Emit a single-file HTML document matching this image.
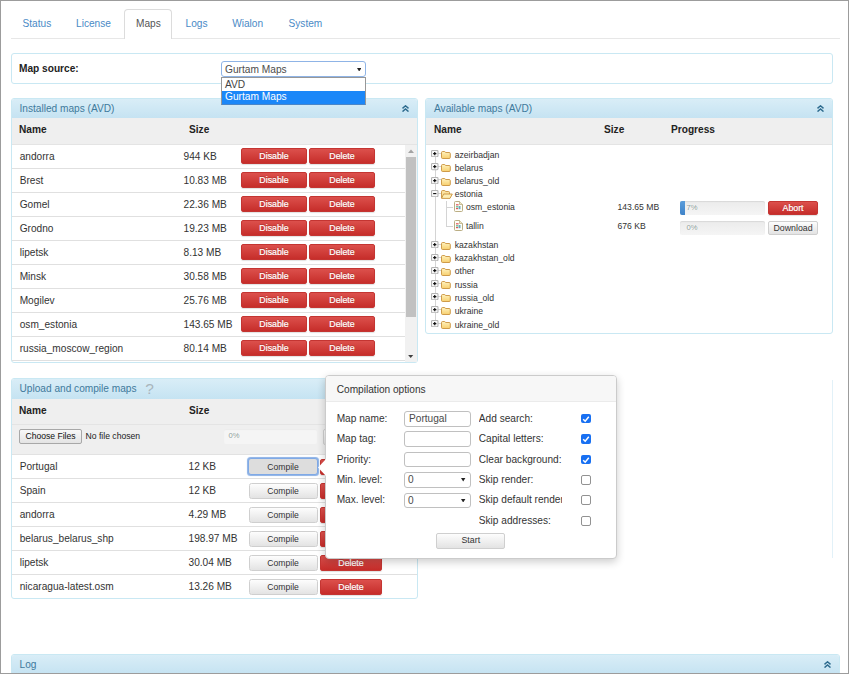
<!DOCTYPE html>
<html>
<head>
<meta charset="utf-8">
<title>Maps</title>
<style>
*{box-sizing:border-box;}
html,body{margin:0;padding:0;}
body{width:849px;height:674px;overflow:hidden;background:#fff;font-family:"Liberation Sans",Arial,sans-serif;font-size:10.15px;color:#333;position:relative;}
.frame{position:absolute;background:#9c9c9c;z-index:100;}
.abs{position:absolute;}
.t{position:absolute;white-space:nowrap;line-height:14px;height:14px;}
.tabline{position:absolute;left:11px;top:37.7px;width:829px;height:1px;background:#e7e7e7;}
.tab{position:absolute;top:16.5px;color:#4a8ac6;line-height:14px;white-space:nowrap;}
.tabact{position:absolute;left:124px;top:8.5px;width:48px;height:30.2px;border:1px solid #dcdcdc;border-bottom:none;border-radius:4px 4px 0 0;background:#fff;}
.panel{position:absolute;border:1px solid #c9e8f3;border-radius:3px;background:#fff;}
.phead{position:absolute;left:0;top:0;right:0;height:19px;background:linear-gradient(#d9edf7,#c5e3f2);border-radius:2px 2px 0 0;color:#3f7a9c;}
.colhead{position:absolute;left:0;right:0;top:19px;height:27px;background:#efefef;border-bottom:1px solid #e4e4e4;font-weight:bold;color:#222;}
.ln{position:absolute;height:1px;background:#e0e0e0;}
.btn{position:absolute;border-radius:2px;font-size:8.8px;text-align:center;white-space:nowrap;}
.red{background:linear-gradient(#dc504c,#c62d2a);color:#fff;-webkit-text-stroke:0.2px #fff;text-shadow:0 -1px 0 rgba(0,0,0,.2);border:1px solid #c43532;box-shadow:0 1px 1px rgba(0,0,0,.12);}
.gray{background:linear-gradient(#fdfdfd,#e3e3e3);color:#333;border:1px solid #cfcfcf;}
.prog{position:absolute;height:14px;border-radius:2px;background:linear-gradient(#ebebeb,#f5f5f5);box-shadow:inset 0 1px 1px rgba(0,0,0,.08);}
.ptxt{font-size:7.6px;line-height:8px;color:#8d9b98;text-shadow:0 0 1px #fff,0 0 2px #fff;white-space:nowrap;}
.inp{position:absolute;width:67.5px;height:15.6px;border:1px solid #c0c0c0;border-radius:3px;background:#fff;}
.cb{position:absolute;width:9.8px;height:9.8px;border-radius:2px;}
.cb.on{background:#1870f2;}
.cb.off{background:#fff;border:1px solid #929292;}
.tree{font-size:8.65px;color:#333;}
</style>
</head>
<body>
<div class="frame" style="left:0;top:0;width:1.2px;height:674px"></div><div class="frame" style="left:0;top:0;width:849px;height:1px"></div><div class="frame" style="left:847.9px;top:0;width:1.1px;height:674px"></div><div class="frame" style="left:0;top:672.7px;width:849px;height:1.3px"></div>
<svg width="0" height="0" style="position:absolute"><linearGradient id="fg" x1="0" y1="0" x2="0" y2="1"><stop offset="0" stop-color="#fff3bf"/><stop offset="1" stop-color="#f7cf6e"/></linearGradient></svg>
<div class="tabline"></div>
<div class="tabact"></div>
<div class="tab" style="left:22.5px">Status</div>
<div class="tab" style="left:76px">License</div>
<div class="tab" style="left:185.5px">Logs</div>
<div class="tab" style="left:232.2px">Wialon</div>
<div class="tab" style="left:288.5px">System</div>
<div class="tab" style="left:136px;color:#555">Maps</div>
<div class="panel" style="left:11px;top:53px;width:822px;height:31px;"><span class="t" style="left:7px;top:8px;font-weight:bold;color:#222;">Map source:</span></div>
<div class="panel" style="left:11px;top:98px;width:407px;height:265px;">
<div class="phead"><span class="t" style="left:7.5px;top:3px;">Installed maps (AVD)</span><svg class="abs" style="right:8px;top:6.1px" width="7" height="7" viewBox="0 0 7 7"><path d="M0.5 3.4 L3.5 0.8 L6.5 3.4 M0.5 6.6 L3.5 4 L6.5 6.6" fill="none" stroke="#2d6b8e" stroke-width="1.4"/></svg></div>
<div class="colhead"><span class="t" style="left:7px;top:4.800000000000001px;">Name</span><span class="t" style="left:177px;top:4.800000000000001px;">Size</span></div>
<span class="t" style="left:7.7px;top:50.5px;">andorra</span><span class="t" style="left:171.5px;top:50.5px;">944 KB</span>
<div class="btn red" style="left:229px;top:49px;width:66px;height:16px;line-height:14px;">Disable</div>
<div class="btn red" style="left:297px;top:49px;width:66px;height:16px;line-height:14px;">Delete</div>
<div class="ln" style="left:0;width:393px;top:69px"></div>
<span class="t" style="left:7.7px;top:74.5px;">Brest</span><span class="t" style="left:171.5px;top:74.5px;">10.83 MB</span>
<div class="btn red" style="left:229px;top:73px;width:66px;height:16px;line-height:14px;">Disable</div>
<div class="btn red" style="left:297px;top:73px;width:66px;height:16px;line-height:14px;">Delete</div>
<div class="ln" style="left:0;width:393px;top:93px"></div>
<span class="t" style="left:7.7px;top:98.5px;">Gomel</span><span class="t" style="left:171.5px;top:98.5px;">22.36 MB</span>
<div class="btn red" style="left:229px;top:97px;width:66px;height:16px;line-height:14px;">Disable</div>
<div class="btn red" style="left:297px;top:97px;width:66px;height:16px;line-height:14px;">Delete</div>
<div class="ln" style="left:0;width:393px;top:117px"></div>
<span class="t" style="left:7.7px;top:122.5px;">Grodno</span><span class="t" style="left:171.5px;top:122.5px;">19.23 MB</span>
<div class="btn red" style="left:229px;top:121px;width:66px;height:16px;line-height:14px;">Disable</div>
<div class="btn red" style="left:297px;top:121px;width:66px;height:16px;line-height:14px;">Delete</div>
<div class="ln" style="left:0;width:393px;top:141px"></div>
<span class="t" style="left:7.7px;top:146.5px;">lipetsk</span><span class="t" style="left:171.5px;top:146.5px;">8.13 MB</span>
<div class="btn red" style="left:229px;top:145px;width:66px;height:16px;line-height:14px;">Disable</div>
<div class="btn red" style="left:297px;top:145px;width:66px;height:16px;line-height:14px;">Delete</div>
<div class="ln" style="left:0;width:393px;top:165px"></div>
<span class="t" style="left:7.7px;top:170.5px;">Minsk</span><span class="t" style="left:171.5px;top:170.5px;">30.58 MB</span>
<div class="btn red" style="left:229px;top:169px;width:66px;height:16px;line-height:14px;">Disable</div>
<div class="btn red" style="left:297px;top:169px;width:66px;height:16px;line-height:14px;">Delete</div>
<div class="ln" style="left:0;width:393px;top:189px"></div>
<span class="t" style="left:7.7px;top:194.5px;">Mogilev</span><span class="t" style="left:171.5px;top:194.5px;">25.76 MB</span>
<div class="btn red" style="left:229px;top:193px;width:66px;height:16px;line-height:14px;">Disable</div>
<div class="btn red" style="left:297px;top:193px;width:66px;height:16px;line-height:14px;">Delete</div>
<div class="ln" style="left:0;width:393px;top:213px"></div>
<span class="t" style="left:7.7px;top:218.5px;">osm_estonia</span><span class="t" style="left:171.5px;top:218.5px;">143.65 MB</span>
<div class="btn red" style="left:229px;top:217px;width:66px;height:16px;line-height:14px;">Disable</div>
<div class="btn red" style="left:297px;top:217px;width:66px;height:16px;line-height:14px;">Delete</div>
<div class="ln" style="left:0;width:393px;top:237px"></div>
<span class="t" style="left:7.7px;top:242.5px;">russia_moscow_region</span><span class="t" style="left:171.5px;top:242.5px;">80.14 MB</span>
<div class="btn red" style="left:229px;top:241px;width:66px;height:16px;line-height:14px;">Disable</div>
<div class="btn red" style="left:297px;top:241px;width:66px;height:16px;line-height:14px;">Delete</div>
<div class="ln" style="left:0;width:393px;top:261px"></div>
<div class="abs" style="left:393px;top:46px;width:12px;height:217px;background:#f1f1f1;"></div>
<div class="abs" style="left:394px;top:58px;width:10px;height:160px;background:#c1c1c1;"></div>
<svg class="abs" style="left:396px;top:50px" width="6" height="4" viewBox="0 0 6 4"><path d="M0 4L3 0.5L6 4Z" fill="#a3a3a3"/></svg>
<svg class="abs" style="left:396.3px;top:255.5px" width="5.4" height="3.4" viewBox="0 0 6 4"><path d="M0 0L3 3.5L6 0Z" fill="#404040"/></svg>
</div>
<div class="panel" style="left:425px;top:98px;width:408px;height:236px;">
<div class="phead"><span class="t" style="left:8px;top:3px;">Available maps (AVD)</span><svg class="abs" style="right:8px;top:6.1px" width="7" height="7" viewBox="0 0 7 7"><path d="M0.5 3.4 L3.5 0.8 L6.5 3.4 M0.5 6.6 L3.5 4 L6.5 6.6" fill="none" stroke="#2d6b8e" stroke-width="1.4"/></svg></div>
<div class="colhead"><span class="t" style="left:8px;top:4.800000000000001px;">Name</span><span class="t" style="left:178px;top:4.800000000000001px;">Size</span><span class="t" style="left:245px;top:4.800000000000001px;">Progress</span></div>
<div class="tree">
<div class="abs" style="left:8.5px;top:51px;width:1px;height:173.5px;background:#d4d4d4"></div>
<div class="abs" style="left:12px;top:54.2px;width:5px;height:1px;background:#d4d4d4"></div>
<svg class="abs" style="left:5.1px;top:51.300000000000004px" width="7.5" height="7.2" viewBox="0 0 7 7" preserveAspectRatio="none"><rect x="0.5" y="0.5" width="6" height="6" rx="0.8" fill="#fafafa" stroke="#b4b4b4"/><path d="M2 3.5H5M3.5 2V5" stroke="#111" stroke-width="1.1" fill="none"/></svg>
<svg class="abs" style="left:15.1px;top:52.300000000000004px" width="10" height="8" viewBox="0 0 10 8"><path d="M0.5 1.6Q0.5 0.5 1.6 0.5H3.4Q4.2 0.5 4.6 1.5H8.2Q9.3 1.5 9.3 2.6V6.4Q9.3 7.5 8.2 7.5H1.6Q0.5 7.5 0.5 6.4Z" fill="url(#fg)" stroke="#c9923c" stroke-width="0.9"/></svg>
<span class="t" style="left:28.7px;top:48.7px;">azeirbadjan</span>
<div class="abs" style="left:12px;top:67.3px;width:5px;height:1px;background:#d4d4d4"></div>
<svg class="abs" style="left:5.1px;top:64.39999999999999px" width="7.5" height="7.2" viewBox="0 0 7 7" preserveAspectRatio="none"><rect x="0.5" y="0.5" width="6" height="6" rx="0.8" fill="#fafafa" stroke="#b4b4b4"/><path d="M2 3.5H5M3.5 2V5" stroke="#111" stroke-width="1.1" fill="none"/></svg>
<svg class="abs" style="left:15.1px;top:65.39999999999999px" width="10" height="8" viewBox="0 0 10 8"><path d="M0.5 1.6Q0.5 0.5 1.6 0.5H3.4Q4.2 0.5 4.6 1.5H8.2Q9.3 1.5 9.3 2.6V6.4Q9.3 7.5 8.2 7.5H1.6Q0.5 7.5 0.5 6.4Z" fill="url(#fg)" stroke="#c9923c" stroke-width="0.9"/></svg>
<span class="t" style="left:28.7px;top:61.8px;">belarus</span>
<div class="abs" style="left:12px;top:80.4px;width:5px;height:1px;background:#d4d4d4"></div>
<svg class="abs" style="left:5.1px;top:77.5px" width="7.5" height="7.2" viewBox="0 0 7 7" preserveAspectRatio="none"><rect x="0.5" y="0.5" width="6" height="6" rx="0.8" fill="#fafafa" stroke="#b4b4b4"/><path d="M2 3.5H5M3.5 2V5" stroke="#111" stroke-width="1.1" fill="none"/></svg>
<svg class="abs" style="left:15.1px;top:78.5px" width="10" height="8" viewBox="0 0 10 8"><path d="M0.5 1.6Q0.5 0.5 1.6 0.5H3.4Q4.2 0.5 4.6 1.5H8.2Q9.3 1.5 9.3 2.6V6.4Q9.3 7.5 8.2 7.5H1.6Q0.5 7.5 0.5 6.4Z" fill="url(#fg)" stroke="#c9923c" stroke-width="0.9"/></svg>
<span class="t" style="left:28.7px;top:74.9px;">belarus_old</span>
<div class="abs" style="left:12px;top:93.5px;width:5px;height:1px;background:#d4d4d4"></div>
<svg class="abs" style="left:5.1px;top:90.6px" width="7.5" height="7.2" viewBox="0 0 7 7" preserveAspectRatio="none"><rect x="0.5" y="0.5" width="6" height="6" rx="0.8" fill="#fafafa" stroke="#b4b4b4"/><path d="M2 3.5H5" stroke="#111" stroke-width="1.1" fill="none"/></svg>
<svg class="abs" style="left:15.2px;top:90.6px" width="12" height="9" viewBox="0 0 12 9"><path d="M0.5 8V1.6Q0.5 0.5 1.6 0.5H3.4Q4.2 0.5 4.6 1.5H7.4Q8.5 1.5 8.5 2.6V4" fill="#fbe3a0" stroke="#c9923c" stroke-width="0.9"/><path d="M0.6 8.4L2.6 4H11.3L9 8.4Z" fill="#fdeeb5" stroke="#c9923c" stroke-width="0.9"/></svg>
<span class="t" style="left:28.7px;top:88.0px;">estonia</span>
<div class="abs" style="left:12px;top:144.7px;width:5px;height:1px;background:#d4d4d4"></div>
<svg class="abs" style="left:5.1px;top:141.79999999999998px" width="7.5" height="7.2" viewBox="0 0 7 7" preserveAspectRatio="none"><rect x="0.5" y="0.5" width="6" height="6" rx="0.8" fill="#fafafa" stroke="#b4b4b4"/><path d="M2 3.5H5M3.5 2V5" stroke="#111" stroke-width="1.1" fill="none"/></svg>
<svg class="abs" style="left:15.1px;top:142.79999999999998px" width="10" height="8" viewBox="0 0 10 8"><path d="M0.5 1.6Q0.5 0.5 1.6 0.5H3.4Q4.2 0.5 4.6 1.5H8.2Q9.3 1.5 9.3 2.6V6.4Q9.3 7.5 8.2 7.5H1.6Q0.5 7.5 0.5 6.4Z" fill="url(#fg)" stroke="#c9923c" stroke-width="0.9"/></svg>
<span class="t" style="left:28.7px;top:139.2px;">kazakhstan</span>
<div class="abs" style="left:12px;top:157.8px;width:5px;height:1px;background:#d4d4d4"></div>
<svg class="abs" style="left:5.1px;top:154.9px" width="7.5" height="7.2" viewBox="0 0 7 7" preserveAspectRatio="none"><rect x="0.5" y="0.5" width="6" height="6" rx="0.8" fill="#fafafa" stroke="#b4b4b4"/><path d="M2 3.5H5M3.5 2V5" stroke="#111" stroke-width="1.1" fill="none"/></svg>
<svg class="abs" style="left:15.1px;top:155.9px" width="10" height="8" viewBox="0 0 10 8"><path d="M0.5 1.6Q0.5 0.5 1.6 0.5H3.4Q4.2 0.5 4.6 1.5H8.2Q9.3 1.5 9.3 2.6V6.4Q9.3 7.5 8.2 7.5H1.6Q0.5 7.5 0.5 6.4Z" fill="url(#fg)" stroke="#c9923c" stroke-width="0.9"/></svg>
<span class="t" style="left:28.7px;top:152.3px;">kazakhstan_old</span>
<div class="abs" style="left:12px;top:170.9px;width:5px;height:1px;background:#d4d4d4"></div>
<svg class="abs" style="left:5.1px;top:168.0px" width="7.5" height="7.2" viewBox="0 0 7 7" preserveAspectRatio="none"><rect x="0.5" y="0.5" width="6" height="6" rx="0.8" fill="#fafafa" stroke="#b4b4b4"/><path d="M2 3.5H5M3.5 2V5" stroke="#111" stroke-width="1.1" fill="none"/></svg>
<svg class="abs" style="left:15.1px;top:169.0px" width="10" height="8" viewBox="0 0 10 8"><path d="M0.5 1.6Q0.5 0.5 1.6 0.5H3.4Q4.2 0.5 4.6 1.5H8.2Q9.3 1.5 9.3 2.6V6.4Q9.3 7.5 8.2 7.5H1.6Q0.5 7.5 0.5 6.4Z" fill="url(#fg)" stroke="#c9923c" stroke-width="0.9"/></svg>
<span class="t" style="left:28.7px;top:165.4px;">other</span>
<div class="abs" style="left:12px;top:184.0px;width:5px;height:1px;background:#d4d4d4"></div>
<svg class="abs" style="left:5.1px;top:181.1px" width="7.5" height="7.2" viewBox="0 0 7 7" preserveAspectRatio="none"><rect x="0.5" y="0.5" width="6" height="6" rx="0.8" fill="#fafafa" stroke="#b4b4b4"/><path d="M2 3.5H5M3.5 2V5" stroke="#111" stroke-width="1.1" fill="none"/></svg>
<svg class="abs" style="left:15.1px;top:182.1px" width="10" height="8" viewBox="0 0 10 8"><path d="M0.5 1.6Q0.5 0.5 1.6 0.5H3.4Q4.2 0.5 4.6 1.5H8.2Q9.3 1.5 9.3 2.6V6.4Q9.3 7.5 8.2 7.5H1.6Q0.5 7.5 0.5 6.4Z" fill="url(#fg)" stroke="#c9923c" stroke-width="0.9"/></svg>
<span class="t" style="left:28.7px;top:178.5px;">russia</span>
<div class="abs" style="left:12px;top:197.1px;width:5px;height:1px;background:#d4d4d4"></div>
<svg class="abs" style="left:5.1px;top:194.2px" width="7.5" height="7.2" viewBox="0 0 7 7" preserveAspectRatio="none"><rect x="0.5" y="0.5" width="6" height="6" rx="0.8" fill="#fafafa" stroke="#b4b4b4"/><path d="M2 3.5H5M3.5 2V5" stroke="#111" stroke-width="1.1" fill="none"/></svg>
<svg class="abs" style="left:15.1px;top:195.2px" width="10" height="8" viewBox="0 0 10 8"><path d="M0.5 1.6Q0.5 0.5 1.6 0.5H3.4Q4.2 0.5 4.6 1.5H8.2Q9.3 1.5 9.3 2.6V6.4Q9.3 7.5 8.2 7.5H1.6Q0.5 7.5 0.5 6.4Z" fill="url(#fg)" stroke="#c9923c" stroke-width="0.9"/></svg>
<span class="t" style="left:28.7px;top:191.6px;">russia_old</span>
<div class="abs" style="left:12px;top:210.2px;width:5px;height:1px;background:#d4d4d4"></div>
<svg class="abs" style="left:5.1px;top:207.29999999999998px" width="7.5" height="7.2" viewBox="0 0 7 7" preserveAspectRatio="none"><rect x="0.5" y="0.5" width="6" height="6" rx="0.8" fill="#fafafa" stroke="#b4b4b4"/><path d="M2 3.5H5M3.5 2V5" stroke="#111" stroke-width="1.1" fill="none"/></svg>
<svg class="abs" style="left:15.1px;top:208.29999999999998px" width="10" height="8" viewBox="0 0 10 8"><path d="M0.5 1.6Q0.5 0.5 1.6 0.5H3.4Q4.2 0.5 4.6 1.5H8.2Q9.3 1.5 9.3 2.6V6.4Q9.3 7.5 8.2 7.5H1.6Q0.5 7.5 0.5 6.4Z" fill="url(#fg)" stroke="#c9923c" stroke-width="0.9"/></svg>
<span class="t" style="left:28.7px;top:204.7px;">ukraine</span>
<div class="abs" style="left:12px;top:224.0px;width:5px;height:1px;background:#d4d4d4"></div>
<svg class="abs" style="left:5.1px;top:221.1px" width="7.5" height="7.2" viewBox="0 0 7 7" preserveAspectRatio="none"><rect x="0.5" y="0.5" width="6" height="6" rx="0.8" fill="#fafafa" stroke="#b4b4b4"/><path d="M2 3.5H5M3.5 2V5" stroke="#111" stroke-width="1.1" fill="none"/></svg>
<svg class="abs" style="left:15.1px;top:222.1px" width="10" height="8" viewBox="0 0 10 8"><path d="M0.5 1.6Q0.5 0.5 1.6 0.5H3.4Q4.2 0.5 4.6 1.5H8.2Q9.3 1.5 9.3 2.6V6.4Q9.3 7.5 8.2 7.5H1.6Q0.5 7.5 0.5 6.4Z" fill="url(#fg)" stroke="#c9923c" stroke-width="0.9"/></svg>
<span class="t" style="left:28.7px;top:218.5px;">ukraine_old</span>
<div class="abs" style="left:20px;top:102px;width:1px;height:25.5px;background:#d4d4d4"></div>
<div class="abs" style="left:21px;top:107.5px;width:6px;height:1px;background:#d4d4d4"></div>
<svg class="abs" style="left:27.8px;top:102.2px" width="9" height="11" viewBox="0 0 9 11"><path d="M0.5 1.5Q0.5 0.5 1.5 0.5H5.5L8.5 3.5V9.5Q8.5 10.5 7.5 10.5H1.5Q0.5 10.5 0.5 9.5Z" fill="#fffef8" stroke="#b3a576" stroke-width="0.9"/><path d="M5.5 0.5V3.5H8.5" fill="#efe7c8" stroke="#b3a576" stroke-width="0.7"/><rect x="2" y="3.2" width="2.6" height="1.2" fill="#e0565b"/><rect x="2" y="5" width="2" height="1.6" fill="#7fc7a2"/><rect x="4.5" y="5" width="2" height="3.2" fill="#6aa7b8"/><rect x="2" y="7" width="2" height="1.2" fill="#e0565b"/></svg>
<span class="t" style="left:40px;top:101.3px;">osm_estonia</span>
<span class="t" style="left:191.5px;top:100.8px;">143.65 MB</span>
<div class="abs" style="left:21px;top:126.5px;width:6px;height:1px;background:#d4d4d4"></div>
<svg class="abs" style="left:27.8px;top:121.2px" width="9" height="11" viewBox="0 0 9 11"><path d="M0.5 1.5Q0.5 0.5 1.5 0.5H5.5L8.5 3.5V9.5Q8.5 10.5 7.5 10.5H1.5Q0.5 10.5 0.5 9.5Z" fill="#fffef8" stroke="#b3a576" stroke-width="0.9"/><path d="M5.5 0.5V3.5H8.5" fill="#efe7c8" stroke="#b3a576" stroke-width="0.7"/><rect x="2" y="3.2" width="2.6" height="1.2" fill="#e0565b"/><rect x="2" y="5" width="2" height="1.6" fill="#7fc7a2"/><rect x="4.5" y="5" width="2" height="3.2" fill="#6aa7b8"/><rect x="2" y="7" width="2" height="1.2" fill="#e0565b"/></svg>
<span class="t" style="left:40px;top:120.3px;">tallin</span>
<span class="t" style="left:191.5px;top:119.8px;">676 KB</span>
<div class="prog" style="left:254px;top:102px;width:85px;"><div class="abs" style="left:0;top:0;width:5px;height:14px;border-radius:2px 0 0 2px;background:linear-gradient(#5b9ddb,#3f83c8)"></div><span class="abs ptxt" style="left:6.5px;top:3px;">7%</span></div>
<div class="prog" style="left:254px;top:121.8px;width:85px;"><span class="abs ptxt" style="left:6.5px;top:3px;">0%</span></div>
<div class="btn red" style="left:342.3px;top:102px;width:49.5px;height:14px;line-height:12px;font-size:8.8px">Abort</div>
<div class="btn gray" style="left:342.3px;top:121.7px;width:49.5px;height:14px;line-height:12px;font-size:8.8px">Download</div>
</div>
</div>
<div class="panel" style="left:11px;top:378px;width:407px;height:221px;">
<div class="phead" style="height:19.8px"><span class="t" style="left:7.5px;top:3.3000000000000007px;">Upload and compile maps</span><span class="t" style="left:133.2px;top:2.8px;font-size:15.5px;color:#a9b5bc">?</span></div>
<div class="colhead" style="top:19.8px;height:26.2px"><span class="t" style="left:7px;top:5.199999999999999px;">Name</span><span class="t" style="left:177px;top:5.199999999999999px;">Size</span></div>
<div class="abs" style="left:0;top:46px;width:405px;height:29.8px;background:#efefef;border-bottom:1px solid #e2e2e2"></div>
<div class="abs" style="left:7px;top:49.7px;width:63px;height:15.3px;border:1px solid #a8a8a8;border-radius:2px;background:linear-gradient(#f8f8f8,#e4e4e4);font-size:8.6px;line-height:13px;text-align:center;color:#111">Choose Files</div>
<span class="t" style="left:73.5px;top:50px;font-size:8.65px;color:#222">No file chosen</span>
<div class="prog" style="left:211.5px;top:50px;width:93px;height:14.5px;background:#f5f5f5;box-shadow:inset 0 1px 1px rgba(0,0,0,.04)"><span class="abs ptxt" style="left:5px;top:3.2px;">0%</span></div>
<div class="btn gray" style="left:311px;top:50px;width:20px;height:15.5px;"></div>
<span class="t" style="left:7.7px;top:80.5px;">Portugal</span><span class="t" style="left:176.5px;top:80.5px;">12 KB</span>
<div class="btn" style="left:236px;top:79px;width:70px;height:17px;line-height:16px;font-size:8.6px;border:1px solid #7fa9e6;box-shadow:0 0 0.8px 0.5px #8db2e6;background:#dddddd;color:#333;border-radius:3px">Compile</div>
<div class="btn red" style="left:308px;top:80px;width:62px;height:16px;line-height:14px;">Delete</div>
<div class="ln" style="left:0;width:405px;top:99px"></div>
<span class="t" style="left:7.7px;top:104.5px;">Spain</span><span class="t" style="left:176.5px;top:104.5px;">12 KB</span>
<div class="btn gray" style="left:236.6px;top:104px;width:69px;height:16px;line-height:14px;font-size:8.6px;border-radius:2.5px">Compile</div>
<div class="btn red" style="left:308px;top:104px;width:62px;height:16px;line-height:14px;">Delete</div>
<div class="ln" style="left:0;width:405px;top:123px"></div>
<span class="t" style="left:7.7px;top:128.5px;">andorra</span><span class="t" style="left:176.5px;top:128.5px;">4.29 MB</span>
<div class="btn gray" style="left:236.6px;top:128px;width:69px;height:16px;line-height:14px;font-size:8.6px;border-radius:2.5px">Compile</div>
<div class="btn red" style="left:308px;top:128px;width:62px;height:16px;line-height:14px;">Delete</div>
<div class="ln" style="left:0;width:405px;top:147px"></div>
<span class="t" style="left:7.7px;top:152.5px;">belarus_belarus_shp</span><span class="t" style="left:176.5px;top:152.5px;">198.97 MB</span>
<div class="btn gray" style="left:236.6px;top:152px;width:69px;height:16px;line-height:14px;font-size:8.6px;border-radius:2.5px">Compile</div>
<div class="btn red" style="left:308px;top:152px;width:62px;height:16px;line-height:14px;">Delete</div>
<div class="ln" style="left:0;width:405px;top:171px"></div>
<span class="t" style="left:7.7px;top:176.5px;">lipetsk</span><span class="t" style="left:176.5px;top:176.5px;">30.04 MB</span>
<div class="btn gray" style="left:236.6px;top:176px;width:69px;height:16px;line-height:14px;font-size:8.6px;border-radius:2.5px">Compile</div>
<div class="btn red" style="left:308px;top:176px;width:62px;height:16px;line-height:14px;">Delete</div>
<div class="ln" style="left:0;width:405px;top:195px"></div>
<span class="t" style="left:7.7px;top:200.5px;">nicaragua-latest.osm</span><span class="t" style="left:176.5px;top:200.5px;">13.26 MB</span>
<div class="btn gray" style="left:236.6px;top:200px;width:69px;height:16px;line-height:14px;font-size:8.6px;border-radius:2.5px">Compile</div>
<div class="btn red" style="left:308px;top:200px;width:62px;height:16px;line-height:14px;">Delete</div>
</div>
<div class="abs" style="left:832px;top:379.5px;width:1px;height:178px;background:#e2f1f8"></div>
<div class="panel" style="left:11px;top:654px;width:829px;height:40px;">
<div class="phead"><span class="t" style="left:7.5px;top:3px;">Log</span><svg class="abs" style="right:8px;top:5.5px" width="7" height="7" viewBox="0 0 7 7"><path d="M0.5 3.4 L3.5 0.8 L6.5 3.4 M0.5 6.6 L3.5 4 L6.5 6.6" fill="none" stroke="#2d6b8e" stroke-width="1.4"/></svg></div>
</div>
<div class="abs" style="left:221px;top:61px;width:145px;height:16px;border:1px solid #8fb4e6;border-radius:3px;background:#fff;"><span class="t" style="left:3px;top:1px;font-size:10.2px;color:#4c4c4c">Gurtam Maps</span><svg class="abs" style="right:4px;top:5.5px" width="4.4" height="3.6" viewBox="0 0 5 4"><path d="M0 0H5L2.5 4Z" fill="#222"/></svg></div>
<div class="abs" style="left:221px;top:77px;width:145px;height:27.5px;border:1px solid #979797;border-bottom-color:#4a86c8;background:#fff;"><span class="t" style="left:3px;top:-0.20000000000000018px;font-size:10.2px;color:#444">AVD</span><div class="abs" style="left:0;top:13px;width:143px;height:12.5px;background:#1b87f8"></div><span class="t" style="left:3px;top:12px;font-size:10.2px;color:#fff">Gurtam Maps</span></div>
<div class="abs" style="left:325px;top:375px;width:292px;height:183.5px;border:1px solid #cbcbcb;border-radius:4px;background:#fff;box-shadow:0 3px 8px rgba(0,0,0,.2);">
<div class="abs" style="left:0;top:0;right:0;height:25.5px;background:#f7f7f7;border-bottom:1px solid #ebebeb;border-radius:3px 3px 0 0"></div>
<span class="t" style="left:10.7px;top:7px;">Compilation options</span>
<span class="t" style="left:10.7px;top:36px;">Map name:</span>
<span class="t" style="left:10.7px;top:56px;">Map tag:</span>
<span class="t" style="left:10.7px;top:77px;">Priority:</span>
<span class="t" style="left:10.7px;top:97px;">Min. level:</span>
<span class="t" style="left:10.7px;top:117px;">Max. level:</span>
<div class="inp" style="left:77.5px;top:35px;"><span class="t" style="left:4.5px;top:0px;color:#4a4a4a">Portugal</span></div>
<div class="inp" style="left:77.5px;top:55.3px;"></div>
<div class="inp" style="left:77.5px;top:75.5px;"></div>
<div class="inp" style="left:77.5px;top:96.2px;height:15.8px"><span class="t" style="left:3.5px;top:0px;color:#4a4a4a">0</span><svg class="abs" style="right:4.5px;top:5.2px" width="4.4" height="3.6" viewBox="0 0 5 4"><path d="M0 0H5L2.5 4Z" fill="#222"/></svg></div>
<div class="inp" style="left:77.5px;top:116.6px;height:15.8px"><span class="t" style="left:3.5px;top:0px;color:#4a4a4a">0</span><svg class="abs" style="right:4.5px;top:5.2px" width="4.4" height="3.6" viewBox="0 0 5 4"><path d="M0 0H5L2.5 4Z" fill="#222"/></svg></div>
<span class="t" style="left:152.8px;top:36px;width:83.3px;overflow:hidden">Add search:</span>
<div class="cb on" style="left:255px;top:37.7px"><svg width="10" height="10" viewBox="0 0 10 10" style="position:absolute;left:0;top:0"><path d="M2.2 5.2L4.2 7.2L7.8 2.8" fill="none" stroke="#fff" stroke-width="1.5"/></svg></div>
<span class="t" style="left:152.8px;top:56px;width:83.3px;overflow:hidden">Capital letters:</span>
<div class="cb on" style="left:255px;top:58.12px"><svg width="10" height="10" viewBox="0 0 10 10" style="position:absolute;left:0;top:0"><path d="M2.2 5.2L4.2 7.2L7.8 2.8" fill="none" stroke="#fff" stroke-width="1.5"/></svg></div>
<span class="t" style="left:152.8px;top:77px;width:83.3px;overflow:hidden">Clear background:</span>
<div class="cb on" style="left:255px;top:78.54px"><svg width="10" height="10" viewBox="0 0 10 10" style="position:absolute;left:0;top:0"><path d="M2.2 5.2L4.2 7.2L7.8 2.8" fill="none" stroke="#fff" stroke-width="1.5"/></svg></div>
<span class="t" style="left:152.8px;top:97px;width:83.3px;overflow:hidden">Skip render:</span>
<div class="cb off" style="left:255px;top:98.96px"></div>
<span class="t" style="left:152.8px;top:117px;width:83.3px;overflow:hidden">Skip default render:</span>
<div class="cb off" style="left:255px;top:119.38px"></div>
<span class="t" style="left:152.8px;top:138px;width:83.3px;overflow:hidden">Skip addresses:</span>
<div class="cb off" style="left:255px;top:139.8px"></div>
<div class="btn gray" style="left:110.3px;top:157.4px;width:69px;height:15.5px;line-height:13.5px;">Start</div>
<svg class="abs" style="left:-7.8px;top:82.5px" width="8" height="17" viewBox="0 0 8 17"><path d="M8 0L0 8.5L8 17Z" fill="#fff"/></svg>
</div>
</body>
</html>
